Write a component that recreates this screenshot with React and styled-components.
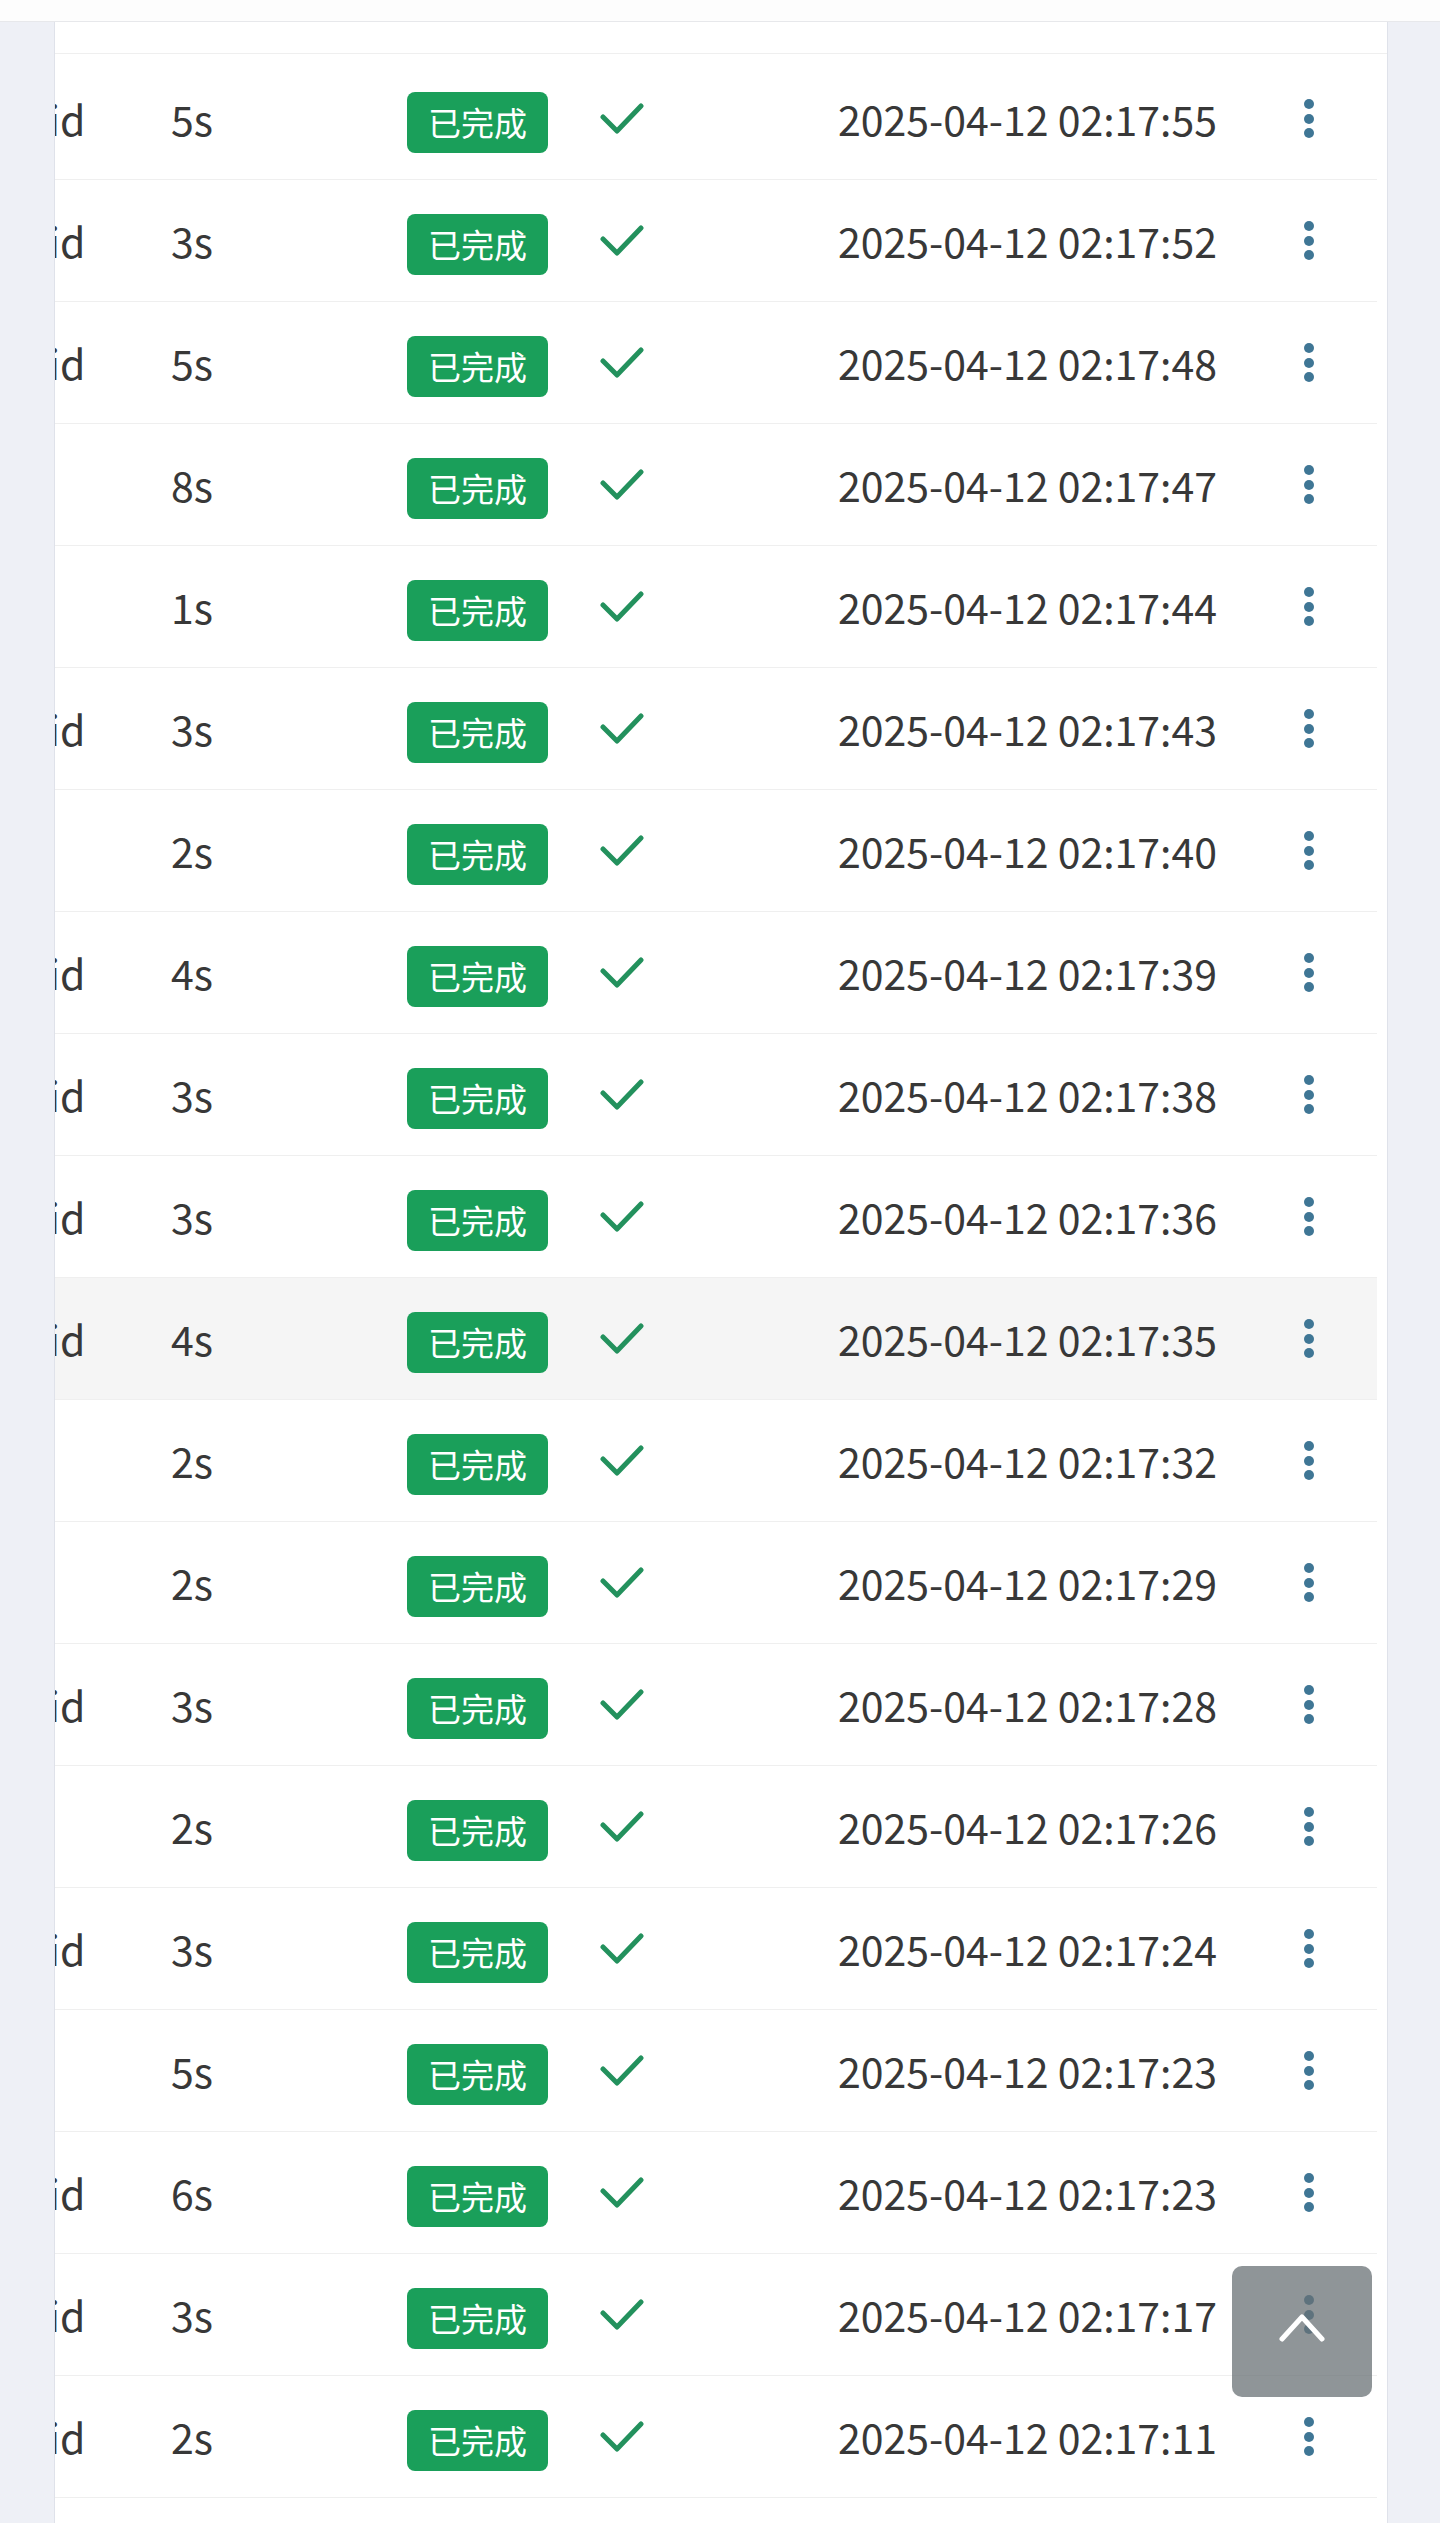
import React, { useLayoutEffect, useRef } from "react";
import styled, { createGlobalStyle } from "styled-components";

const GlobalStyle = createGlobalStyle`
  html, body {
    margin: 0;
    padding: 0;
    background: #ffffff;
  }
  body {
    font-family: "Noto Sans CJK SC", "Noto Sans", sans-serif;
    color: #383838;
  }
  * {
    box-sizing: border-box;
  }
`;

const Page = styled.div`
  min-height: 100vh;
  display: flex;
  flex-direction: column;
`;

const TopBar = styled.div`
  height: 22px;
  flex-shrink: 0;
  background: #fdfdfd;
  border-bottom: 1px solid #e7e8eb;
`;

const Body = styled.div`
  flex: 1;
  display: flex;
`;

const SideStrip = styled.div`
  width: ${(p) => p.$w}px;
  flex-shrink: 0;
  background: #eef0f6;
`;

const Card = styled.main`
  flex: 1;
  min-width: 0;
  background: #ffffff;
  border-left: 1px solid #dfe2ea;
  border-right: 1px solid #dfe2ea;
  padding-top: 31px;
`;

const Scroller = styled.div`
  overflow-x: hidden;
`;

const Table = styled.div`
  width: max-content;
  padding-right: 10px;
  padding-top: 4px;
  border-top: 1px solid #efefef;
`;

const Row = styled.div`
  display: grid;
  grid-template-columns: 240px 236px 193px 238px 442px 58px 39px;
  align-items: center;
  height: 122px;
  border-bottom: 1px solid #efefef;
  background: ${(p) => (p.$hover ? "#f5f5f5" : "#ffffff")};
  font-size: 41px;
  line-height: 1;
`;

const PlatformCell = styled.div`
  padding-left: 2px;
  white-space: nowrap;
`;

const TextCell = styled.div`
  white-space: nowrap;
`;

const Badge = styled.span`
  display: inline-flex;
  align-items: center;
  justify-content: center;
  height: 61px;
  padding: 0 21px;
  margin-top: 7px;
  border-radius: 8px;
  background: #1a9f5a;
  color: #ffffff;
  font-size: 33px;
  line-height: 1;
`;

const CheckCell = styled.div`
  display: flex;
  align-items: center;
`;

const Kebab = styled.button`
  display: flex;
  flex-direction: column;
  align-items: center;
  gap: 4.5px;
  padding: 0;
  margin: 0 auto;
  border: 0;
  background: transparent;
`;

const Dot = styled.span`
  width: 10px;
  height: 10px;
  border-radius: 50%;
  background: #3f7695;
`;

const BackTop = styled.button`
  position: fixed;
  right: 68px;
  bottom: 126px;
  width: 140px;
  height: 131px;
  border: 0;
  border-radius: 10px;
  background: rgba(106, 113, 117, 0.75);
  display: flex;
  align-items: center;
  justify-content: center;
  padding: 0 0 8px;
`;

const rows = [
  ["Android", "5s", "02:17:55"],
  ["Android", "3s", "02:17:52"],
  ["Android", "5s", "02:17:48"],
  ["iOS", "8s", "02:17:47"],
  ["iOS", "1s", "02:17:44"],
  ["Android", "3s", "02:17:43"],
  ["iOS", "2s", "02:17:40"],
  ["Android", "4s", "02:17:39"],
  ["Android", "3s", "02:17:38"],
  ["Android", "3s", "02:17:36"],
  ["Android", "4s", "02:17:35"],
  ["iOS", "2s", "02:17:32"],
  ["iOS", "2s", "02:17:29"],
  ["Android", "3s", "02:17:28"],
  ["iOS", "2s", "02:17:26"],
  ["Android", "3s", "02:17:24"],
  ["iOS", "5s", "02:17:23"],
  ["Android", "6s", "02:17:23"],
  ["Android", "3s", "02:17:17"],
  ["Android", "2s", "02:17:11"],
];

const CheckIcon = () => (
  <svg width="44" height="32" viewBox="0 0 44 32">
    <polyline
      points="3,14 17,28 41,3"
      fill="none"
      stroke="#23915d"
      strokeWidth="5"
      strokeLinecap="round"
      strokeLinejoin="round"
    />
  </svg>
);

const App = () => {
  const scrollRef = useRef(null);

  // 表格已经横向滚到最右边
  useLayoutEffect(() => {
    const el = scrollRef.current;
    if (el) el.scrollLeft = el.scrollWidth;
  }, []);

  return (
    <>
      <GlobalStyle />
      <Page>
        <TopBar />
        <Body>
          <SideStrip $w={54} />
          <Card>
            <Scroller ref={scrollRef}>
              <Table>
                {rows.map((r, i) => (
                  <Row key={i} $hover={i === 10}>
                    <PlatformCell>{r[0]}</PlatformCell>
                    <TextCell>{r[1]}</TextCell>
                    <div>
                      <Badge>已完成</Badge>
                    </div>
                    <CheckCell>
                      <CheckIcon />
                    </CheckCell>
                    <TextCell>2025-04-12 {r[2]}</TextCell>
                    <div>
                      <Kebab>
                        <Dot />
                        <Dot />
                        <Dot />
                      </Kebab>
                    </div>
                    <div />
                  </Row>
                ))}
              </Table>
            </Scroller>
          </Card>
          <SideStrip $w={52} />
        </Body>
      </Page>
      <BackTop>
        <svg width="46" height="30" viewBox="0 0 46 30">
          <polyline
            points="3,26 23,4 43,26"
            fill="none"
            stroke="#ffffff"
            strokeWidth="5"
            strokeLinecap="round"
            strokeLinejoin="round"
          />
        </svg>
      </BackTop>
    </>
  );
};

export default App;
